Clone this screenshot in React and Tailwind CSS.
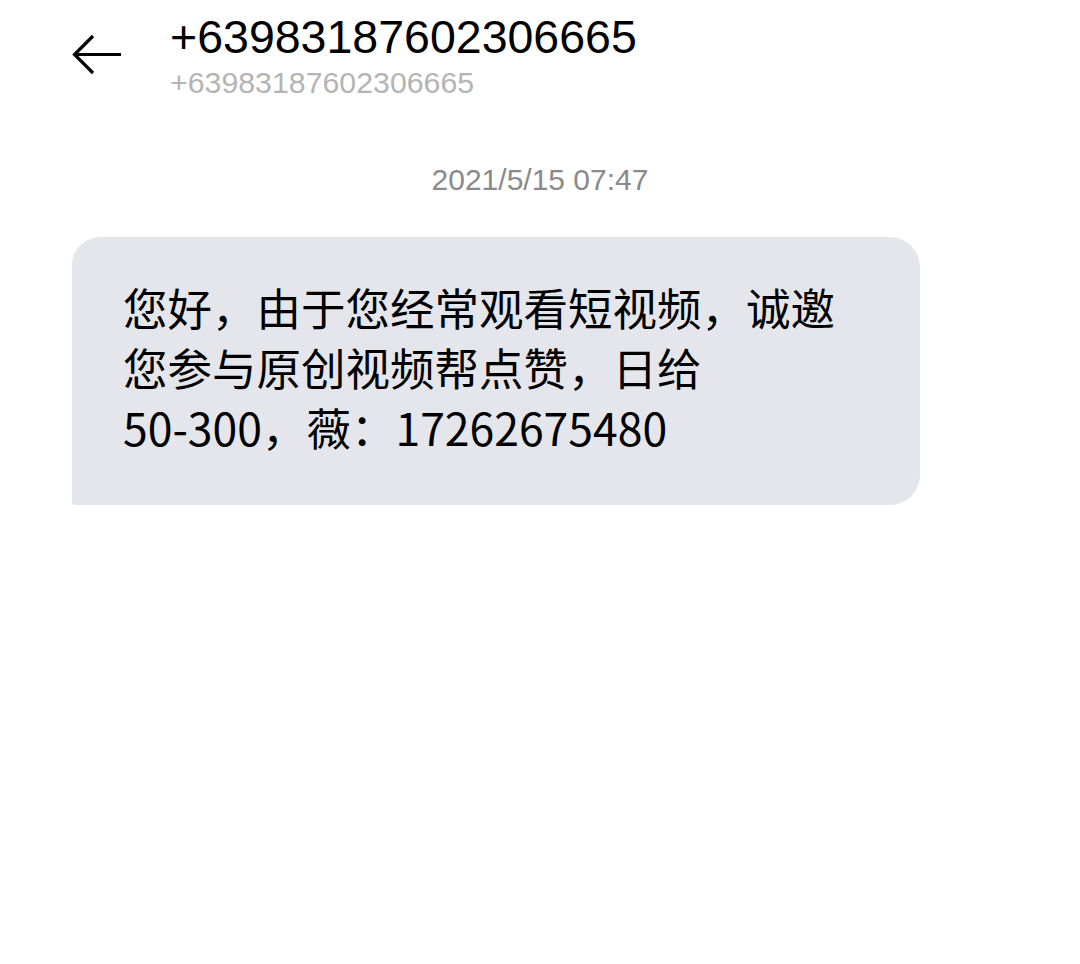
import React from 'react';

const BackArrow = () => (
  <svg width="52" height="42" viewBox="0 0 52 42" fill="none" stroke="#000" strokeWidth="3.2" strokeLinecap="butt">
    <path d="M50 20.5 H3" />
    <path d="M22 2 L3.5 20.5 L22 39" strokeLinejoin="miter" />
  </svg>
);

export default function App() {
  return (
    <div className="min-h-[964px] w-[1080px] bg-white" style={{ fontFamily: '"Liberation Sans", "Noto Sans CJK SC", sans-serif' }}>
      {/* header */}
      <div className="flex items-start pl-[71px] pt-[11px]">
        <div className="mt-[23px] w-[99px]">
          <BackArrow />
        </div>
        <div className="flex flex-col">
          <div className="text-[46.5px] leading-[52px] text-black">+63983187602306665</div>
          <div className="mt-[3px] text-[30.3px] leading-[34px] text-[#b4b4b4]">+63983187602306665</div>
        </div>
      </div>

      {/* timestamp */}
      <div className="mt-[63px] text-center text-[30px] leading-[34px] text-[#8a8a8a]">2021/5/15 07:47</div>

      {/* message bubble */}
      <div className="mt-[40px] pl-[72px]">
        <div className="w-[848px] rounded-tl-[28px] rounded-bl-[3px] rounded-r-[30px] bg-[#e4e6eb] pl-[51px] pt-[40px] pb-[48px]">
          <p className="text-[44.5px] leading-[60px] text-black" style={{ fontFamily: '"Noto Sans CJK SC", sans-serif' }}>
            您好，由于您经常观看短视频，诚邀
            <br />
            您参与原创视频帮点赞，日给
            <br />
            50-300，薇：17262675480
          </p>
        </div>
      </div>
    </div>
  );
}
